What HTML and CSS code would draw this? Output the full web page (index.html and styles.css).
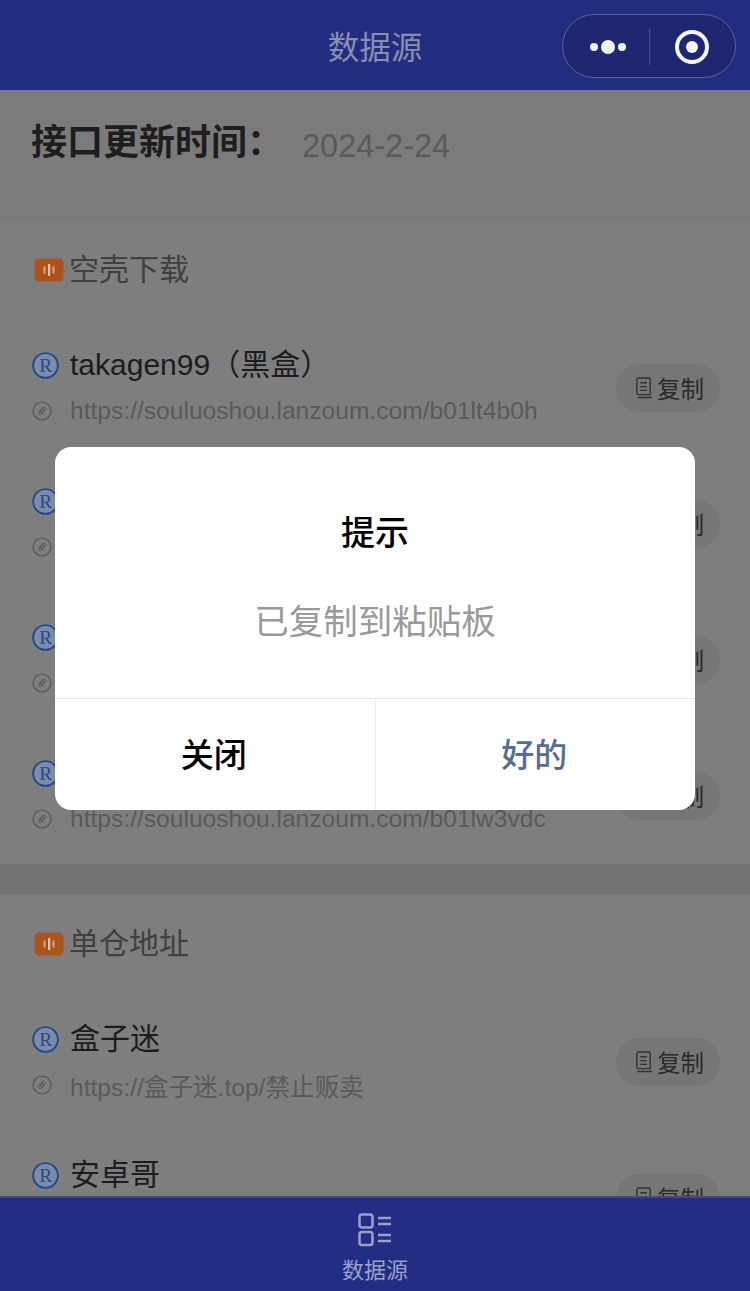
FILE: index.html
```html
<!DOCTYPE html>
<html lang="zh">
<head>
<meta charset="utf-8">
<title>数据源</title>
<link rel="stylesheet" href="styles.css">
</head>
<body>
<svg class="defs" width="0" height="0" aria-hidden="true">
  <symbol id="reg" viewBox="0 0 28 28">
    <circle cx="14" cy="14" r="12.8" fill="#7d8ba6" stroke="#234a8e" stroke-width="2"/>
    <text x="14.200" y="20.800" text-anchor="middle" font-family="Liberation Serif, serif" font-size="20" fill="#234a8e">R</text>
  </symbol>
  <symbol id="link" viewBox="0 0 22 22">
    <circle cx="11" cy="11" r="9.800" fill="none" stroke="#595959" stroke-width="1.400"/>
    <path d="M6.500 13.500l3.600-3.600a1.600 1.600 0 0 1 2.300 2.300l-2.200 2.200a1.600 1.600 0 0 1-2.300 0M15.500 8.500l-3.600 3.600a1.600 1.600 0 0 1-2.300-2.300l2.200-2.200a1.600 1.600 0 0 1 2.300 0" fill="none" stroke="#595959" stroke-width="1.200"/>
  </symbol>
  <symbol id="doc" viewBox="0 0 20 24">
    <path d="M3.500 1.500h11a1.500 1.500 0 0 1 1.500 1.500v16H3.500a1.500 1.500 0 0 1-1.500-1.500V3a1.500 1.500 0 0 1 1.500-1.500z" fill="none" stroke="#333" stroke-width="1.500"/>
    <path d="M5.500 6.500h7M5.500 10.500h7M5.500 14.500h7M2.500 22h15.500" fill="none" stroke="#333" stroke-width="1.400"/>
  </symbol>
  <symbol id="bars" viewBox="0 0 30 24">
    <rect x="0.500" y="0.500" width="29" height="23" rx="4.500" fill="#aa531e"/>
    <rect x="9.500" y="8.500" width="2" height="7" fill="#d9a67f"/>
    <rect x="14" y="6" width="2.200" height="12" fill="#e6c3a8"/>
    <rect x="18.500" y="8.500" width="2" height="7" fill="#d9a67f"/>
  </symbol>
</svg>

<div class="page">
  <header class="navbar">
    <h1 class="nav-title">数据源</h1>
    <div class="capsule">
      <div class="cap-more"><i class="dot"></i><i class="dot dot-big"></i><i class="dot"></i></div>
      <span class="cap-sep"></span>
      <div class="cap-target"><i class="target-core"></i></div>
    </div>
  </header>

  <main class="content">
    <section class="update">
      <span class="update-label">接口更新时间：</span>
      <span class="update-date">2024-2-24</span>
    </section>

    <section class="group">
      <div class="group-head"><svg class="ico-bars"><use href="#bars"/></svg><span class="group-text">空壳下载</span></div>
      <div class="row">
        <div class="row-main">
          <div class="row-name"><svg class="ico-reg"><use href="#reg"/></svg><span class="name-text">takagen99（黑盒）</span></div>
          <div class="row-url"><svg class="ico-link"><use href="#link"/></svg><span>https://souluoshou.lanzoum.com/b01lt4b0h</span></div>
        </div>
        <div class="copy"><svg class="ico-doc"><use href="#doc"/></svg><span>复制</span></div>
      </div>
      <div class="row">
        <div class="row-main">
          <div class="row-name"><svg class="ico-reg"><use href="#reg"/></svg></div>
          <div class="row-url"><svg class="ico-link"><use href="#link"/></svg></div>
        </div>
        <div class="copy"><svg class="ico-doc"><use href="#doc"/></svg><span>复制</span></div>
      </div>
      <div class="row">
        <div class="row-main">
          <div class="row-name"><svg class="ico-reg"><use href="#reg"/></svg></div>
          <div class="row-url"><svg class="ico-link"><use href="#link"/></svg></div>
        </div>
        <div class="copy"><svg class="ico-doc"><use href="#doc"/></svg><span>复制</span></div>
      </div>
      <div class="row">
        <div class="row-main">
          <div class="row-name"><svg class="ico-reg"><use href="#reg"/></svg></div>
          <div class="row-url"><svg class="ico-link"><use href="#link"/></svg><span>https://souluoshou.lanzoum.com/b01lw3vdc</span></div>
        </div>
        <div class="copy"><svg class="ico-doc"><use href="#doc"/></svg><span>复制</span></div>
      </div>
    </section>

    <section class="group">
      <div class="group-head"><svg class="ico-bars"><use href="#bars"/></svg><span class="group-text">单仓地址</span></div>
      <div class="row">
        <div class="row-main">
          <div class="row-name"><svg class="ico-reg"><use href="#reg"/></svg><span class="name-text">盒子迷</span></div>
          <div class="row-url"><svg class="ico-link"><use href="#link"/></svg><span>https://盒子迷.top/禁止贩卖</span></div>
        </div>
        <div class="copy"><svg class="ico-doc"><use href="#doc"/></svg><span>复制</span></div>
      </div>
      <div class="row">
        <div class="row-main">
          <div class="row-name"><svg class="ico-reg"><use href="#reg"/></svg><span class="name-text">安卓哥</span></div>
          <div class="row-url"><svg class="ico-link"><use href="#link"/></svg></div>
        </div>
        <div class="copy"><svg class="ico-doc"><use href="#doc"/></svg><span>复制</span></div>
      </div>
    </section>
  </main>

  <footer class="tabbar">
    <svg class="tab-icon" viewBox="0 0 34 34">
      <rect x="1.500" y="1.500" width="13" height="13" rx="2.500"/>
      <rect x="1.500" y="19" width="13" height="13" rx="2.500"/>
      <path d="M20 5h13M20 11h13M20 22h13M20 28h13"/>
    </svg>
    <span class="tab-label">数据源</span>
  </footer>

  <div class="modal">
    <div class="modal-body">
      <div class="modal-title">提示</div>
      <div class="modal-text">已复制到粘贴板</div>
    </div>
    <div class="modal-foot">
      <div class="btn btn-close">关闭</div>
      <div class="btn btn-ok">好的</div>
    </div>
  </div>
</div>
</body>
</html>
```

FILE: styles.css
```css
* { box-sizing: border-box; margin: 0; padding: 0; }
html, body { width: 750px; height: 1291px; overflow: hidden; background: #7e7e7e; }
body { font-family: "Liberation Sans", "Noto Sans CJK SC", sans-serif; }
.defs { position: absolute; }

.page { position: relative; width: 750px; height: 1291px; display: flex; flex-direction: column; overflow: hidden; }

.navbar { flex: 0 0 90px; background: #232d80; position: relative; display: flex; align-items: center; justify-content: center; }
.nav-title { font-size: 31.500px; font-weight: 400; line-height: 1; color: #8a8fb0; margin-top: 8px; }
.capsule { position: absolute; top: 14px; right: 14px; width: 174px; height: 64px; border-radius: 32px; background: #1e276f; border: 1px solid #5a62a3; display: flex; align-items: center; padding-top: 1px; }
.cap-more { width: 86px; display: flex; align-items: center; justify-content: center; gap: 3px; padding-left: 4px; }
.dot { width: 8px; height: 8px; border-radius: 50%; background: #f4f5fa; }
.dot-big { width: 14px; height: 14px; }
.cap-sep { width: 1px; height: 36px; background: #4a5296; }
.cap-target { width: 34px; height: 34px; margin-left: 25px; border-radius: 50%; border: 4px solid #f4f5fa; display: flex; align-items: center; justify-content: center; }
.target-core { width: 12px; height: 12px; border-radius: 50%; background: #f4f5fa; }

.content { flex: 1 1 0; min-height: 0; overflow: hidden; background: #737373; }

.update { height: 130px; background: #7b7b7b; display: flex; align-items: flex-start; padding: 33px 0 0 31px; }
.update-label { font-size: 36px; font-weight: 700; line-height: 40px; color: #1e1e1e; width: 271px; white-space: nowrap; }
.update-date { font-size: 32.500px; line-height: 40px; color: #5a5a5a; margin-top: 3px; }

.group { background: #7e7e7e; margin-bottom: 30px; }
.group-head { height: 100px; padding: 0 0 0 34px; display: flex; align-items: center; gap: 5px; font-size: 30px; color: #404040; border-bottom: 1px solid #797979; }
.group-text { margin-bottom: 6px; }
.ico-bars { width: 30px; height: 24px; }

.row { height: 136px; padding: 0 30px 0 32px; display: flex; align-items: center; justify-content: space-between; border-bottom: 1px solid #797979; }
.row-main { display: flex; flex-direction: column; gap: 13px; margin-top: -2px; }
.row-name { height: 36px; display: flex; align-items: center; gap: 11px; font-size: 30px; color: #1c1c1c; }
.name-text { margin-bottom: 6px; }
.ico-reg { width: 27px; height: 27px; flex: none; }
.row-url { height: 30px; display: flex; align-items: center; gap: 18px; font-size: 24.600px; color: #5a5a5a; }
.ico-link { width: 20px; height: 20px; flex: none; }

.copy { width: 104px; height: 48px; border-radius: 24px; background: #767676; display: flex; align-items: center; padding-left: 19px; gap: 3px; font-size: 23.500px; color: #2a2a2a; }
.ico-doc { width: 19px; height: 24px; }

.tabbar { flex: 0 0 95px; background: #232d85; border-top: 2px solid #4a4580; display: flex; flex-direction: column; align-items: center; padding-top: 15px; position: relative; }
.tab-icon { width: 34px; height: 34px; fill: none; stroke: #9aa1c9; stroke-width: 2.500; }
.tab-label { font-size: 22px; line-height: 26px; margin-top: 11px; color: #9aa1c9; }

.modal { position: absolute; left: 55px; top: 447px; width: 640px; height: 363px; background: #fff; border-radius: 16px; display: flex; flex-direction: column; overflow: hidden; }
.modal-body { height: 251px; display: flex; flex-direction: column; align-items: center; padding-top: 66px; }
.modal-title { font-size: 34px; line-height: 40px; font-weight: 500; color: #000; }
.modal-text { font-size: 34.500px; line-height: 40px; margin-top: 49px; color: #999; }
.modal-foot { flex: 1; display: flex; border-top: 1px solid #e2e2e2; }
.btn { flex: 1; display: flex; align-items: center; justify-content: center; font-size: 33px; font-weight: 500; padding: 0 2px 4px 0; }
.btn-close { color: #000; border-right: 1px solid #ececec; }
.btn-ok { color: #576b95; }
```
